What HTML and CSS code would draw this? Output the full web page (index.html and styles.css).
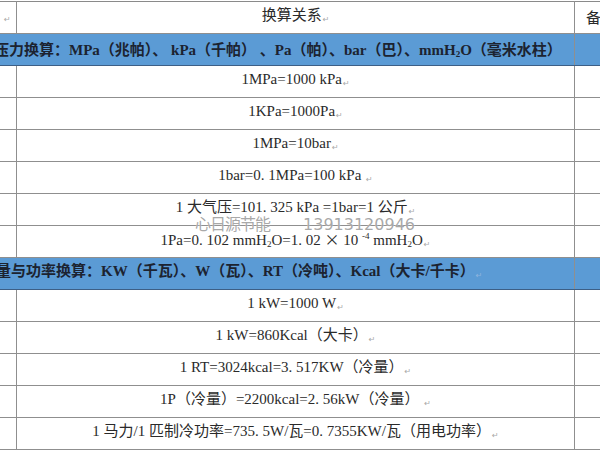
FILE: index.html
```html
<!DOCTYPE html>
<html lang="zh-CN">
<head>
<meta charset="utf-8">
<title>换算关系</title>
<link rel="stylesheet" href="styles.css">
</head>
<body>
<div class="sheet">
  <table class="conv">
    <colgroup>
      <col class="c-idx">
      <col class="c-main">
      <col class="c-note">
    </colgroup>
    <tr class="head">
      <td class="idx"><span class="pm">↵</span></td>
      <td>换算关系<span class="pm">↵</span></td>
      <td class="note">备注</td>
    </tr>
    <tr class="band band-pressure">
      <td colspan="2">压力换算：MPa（兆帕）、 kPa（千帕） 、Pa（帕）、bar（巴）、mmH<sub>2</sub>O（毫米水柱）</td>
      <td></td>
    </tr>
    <tr><td></td><td>1MPa=1000 kPa<span class="pm">↵</span></td><td></td></tr>
    <tr><td></td><td>1KPa=1000Pa<span class="pm">↵</span></td><td></td></tr>
    <tr><td></td><td>1MPa=10bar<span class="pm">↵</span></td><td></td></tr>
    <tr><td></td><td>1bar=0. 1MPa=100 kPa <span class="pm">↵</span></td><td></td></tr>
    <tr><td></td><td>1 大气压=101. 325 kPa =1bar=1 公斤<span class="pm">↵</span></td><td></td></tr>
    <tr><td></td><td>1Pa=0. 102 mmH<sub>2</sub>O=1. 02 <span class="cjk">×</span> 10 <sup>-4</sup> mmH<sub>2</sub>O<span class="pm">↵</span></td><td></td></tr>
    <tr class="band band-power">
      <td colspan="2">能量与功率换算：KW（千瓦）、W（瓦）、RT（冷吨）、Kcal（大卡/千卡）<span class="pm">↵</span></td>
      <td></td>
    </tr>
    <tr><td></td><td>1 kW=1000 W<span class="pm">↵</span></td><td></td></tr>
    <tr><td></td><td>1 kW=860Kcal（大卡）<span class="pm">↵</span></td><td></td></tr>
    <tr><td></td><td>1 RT=3024kcal=3. 517KW（冷量）<span class="pm">↵</span></td><td></td></tr>
    <tr><td></td><td>1P（冷量）=2200kcal=2. 56kW（冷量） <span class="pm">↵</span></td><td></td></tr>
    <tr><td></td><td>1 马力/1 匹制冷功率=735. 5W/瓦=0. 7355KW/瓦（用电功率）<span class="pm">↵</span></td><td></td></tr>
  </table>
  <div class="watermark">心日源节能<span class="wm-num">13913120946</span></div>
</div>
</body>
</html>
```
FILE: styles.css
```css
html, body {
  margin: 0;
  padding: 0;
  background: #ffffff;
}

.sheet {
  position: relative;
  width: 600px;
  height: 450px;
  overflow: hidden;
  padding-top: 1px;
  box-sizing: border-box;
}

.conv {
  border-collapse: collapse;
  table-layout: fixed;
  width: 666px;
  margin-left: -40px;
  font-family: "Liberation Serif", "Noto Sans CJK SC", serif;
  font-size: 15px;
  color: #2a2a2a;
}

.c-idx { width: 56px; }
.c-main { width: 558px; }
.c-note { width: 52px; }

.conv td {
  height: 32px;
  padding: 0;
  box-sizing: border-box;
  border: 1px solid #8f8f8f;
  text-align: center;
  vertical-align: middle;
  white-space: nowrap;
  overflow: visible;
  line-height: 20px;
}

.conv td:nth-child(2),
.conv td:nth-child(3) {
  border-left-color: #9a9a9a;
}

.head td {
  border-top-color: #8a8a8a;
}

.head .idx {
  text-align: left;
  padding-left: 42px;
  vertical-align: middle;
}

.head .note {
  text-align: left;
  padding-left: 11px;
}

.band td {
  background: #5b9bd5;
  border-top: 1px solid #3d5f86;
  border-bottom: 1px solid #3d5f86;
  color: #1c2330;
  font-weight: 700;
  text-align: left;
}

.band td:last-child {
  border-left-color: #4a6d94;
}

.band-pressure td:first-child {
  padding-left: 33px;
}

.band-power td:first-child {
  padding-left: 20px;
}

.cjk {
  font-family: "Noto Sans CJK SC", sans-serif;
}

sub, sup {
  font-size: 9px;
  line-height: 0;
}

sub {
  vertical-align: -2px;
}

sup {
  vertical-align: 6px;
}

.pm {
  font-family: "DejaVu Sans", sans-serif;
  font-size: 8px;
  font-weight: 400;
  color: #a8a8a8;
  margin-left: 1px;
  vertical-align: -2px;
}

.band .pm {
  color: #8fb5dd;
}

.watermark {
  position: absolute;
  left: 195px;
  top: 213px;
  font-family: "Noto Sans CJK SC", serif;
  font-size: 16px;
  line-height: 20px;
  color: rgba(130, 130, 130, 0.7);
  letter-spacing: -1px;
  white-space: nowrap;
  text-shadow: 0 0 1px #ffffff;
}

.wm-num {
  font-family: "DejaVu Sans", sans-serif;
  font-size: 16px;
  letter-spacing: 0;
  margin-left: 33px;
}
```
